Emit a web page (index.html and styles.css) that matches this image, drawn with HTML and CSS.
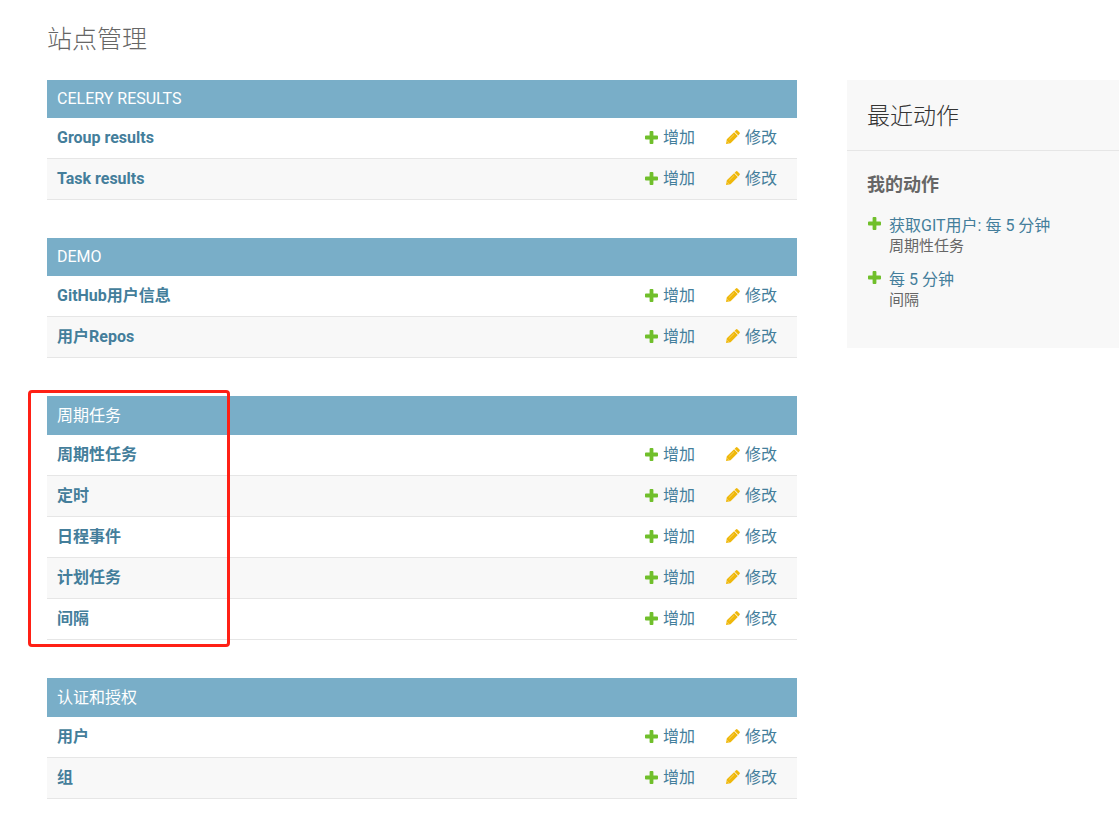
FILE: index.html
```
<!DOCTYPE html>
<html lang="zh-CN">
<head>
<meta charset="utf-8">
<title>站点管理</title>
<link rel="stylesheet" href="styles.css">
</head>
<body>
<svg class="sprite" aria-hidden="true">
  <symbol id="plus" viewBox="0 0 13 13"><path fill="#70bf2b" d="M5.500 0h2q.9 0 .9.9v3.700h3.700q.9 0 .9.9v2q0 .9-.9.9H8.400v3.700q0 .9-.9.9h-2q-.9 0-.9-.9V8.400H.9Q0 8.400 0 7.500v-2q0-.9.9-.9h3.700V.9q0-.9.9-.9z"/></symbol>
  <symbol id="pencil" viewBox="0 0 14 14"><path fill="#efb80b" d="M0 14l.8-4.700 7.300-7 3.700 3.700-7.200 7.200zM8.600 1.800L9.900.5q.8-.8 1.600 0l2 2q.8.800 0 1.600L12.300 5.400z"/><path fill="none" stroke="#fff" stroke-opacity=".6" stroke-width=".6" d="M3.200 9.400l4.800-4.800M1.200 11.300l1.500 1.500"/></symbol>
</svg>
<div class="page">
  <h1 class="title">站点管理</h1>
  <div class="columns">
    <main class="modules">
      <table class="module">
        <caption><a href="#">CELERY RESULTS</a></caption>
        <tbody>
        <tr><th scope="row"><a href="#">Group results</a></th><td><a class="action" href="#"><svg class="icon"><use href="#plus"/></svg>增加</a></td><td><a class="action" href="#"><svg class="icon pencil"><use href="#pencil"/></svg>修改</a></td></tr>
        <tr><th scope="row"><a href="#">Task results</a></th><td><a class="action" href="#"><svg class="icon"><use href="#plus"/></svg>增加</a></td><td><a class="action" href="#"><svg class="icon pencil"><use href="#pencil"/></svg>修改</a></td></tr>
        </tbody>
      </table>
      <table class="module">
        <caption><a href="#">DEMO</a></caption>
        <tbody>
        <tr><th scope="row"><a href="#">GitHub用户信息</a></th><td><a class="action" href="#"><svg class="icon"><use href="#plus"/></svg>增加</a></td><td><a class="action" href="#"><svg class="icon pencil"><use href="#pencil"/></svg>修改</a></td></tr>
        <tr><th scope="row"><a href="#">用户Repos</a></th><td><a class="action" href="#"><svg class="icon"><use href="#plus"/></svg>增加</a></td><td><a class="action" href="#"><svg class="icon pencil"><use href="#pencil"/></svg>修改</a></td></tr>
        </tbody>
      </table>
      <div class="marked">
        <table class="module tall">
          <caption><a href="#">周期任务</a></caption>
          <tbody>
          <tr><th scope="row"><a href="#">周期性任务</a></th><td><a class="action" href="#"><svg class="icon"><use href="#plus"/></svg>增加</a></td><td><a class="action" href="#"><svg class="icon pencil"><use href="#pencil"/></svg>修改</a></td></tr>
          <tr><th scope="row"><a href="#">定时</a></th><td><a class="action" href="#"><svg class="icon"><use href="#plus"/></svg>增加</a></td><td><a class="action" href="#"><svg class="icon pencil"><use href="#pencil"/></svg>修改</a></td></tr>
          <tr><th scope="row"><a href="#">日程事件</a></th><td><a class="action" href="#"><svg class="icon"><use href="#plus"/></svg>增加</a></td><td><a class="action" href="#"><svg class="icon pencil"><use href="#pencil"/></svg>修改</a></td></tr>
          <tr><th scope="row"><a href="#">计划任务</a></th><td><a class="action" href="#"><svg class="icon"><use href="#plus"/></svg>增加</a></td><td><a class="action" href="#"><svg class="icon pencil"><use href="#pencil"/></svg>修改</a></td></tr>
          <tr><th scope="row"><a href="#">间隔</a></th><td><a class="action" href="#"><svg class="icon"><use href="#plus"/></svg>增加</a></td><td><a class="action" href="#"><svg class="icon pencil"><use href="#pencil"/></svg>修改</a></td></tr>
          </tbody>
        </table>
        <div class="marker"></div>
      </div>
      <table class="module tall">
        <caption><a href="#">认证和授权</a></caption>
        <tbody>
        <tr><th scope="row"><a href="#">用户</a></th><td><a class="action" href="#"><svg class="icon"><use href="#plus"/></svg>增加</a></td><td><a class="action" href="#"><svg class="icon pencil"><use href="#pencil"/></svg>修改</a></td></tr>
        <tr><th scope="row"><a href="#">组</a></th><td><a class="action" href="#"><svg class="icon"><use href="#plus"/></svg>增加</a></td><td><a class="action" href="#"><svg class="icon pencil"><use href="#pencil"/></svg>修改</a></td></tr>
        </tbody>
      </table>
    </main>
    <aside class="recent">
      <h2>最近动作</h2>
      <h3>我的动作</h3>
      <ul class="actions">
        <li><svg class="icon"><use href="#plus"/></svg><div><a href="#">获取GIT用户: 每 5 分钟</a><span class="kind">周期性任务</span></div></li>
        <li><svg class="icon"><use href="#plus"/></svg><div><a href="#">每 5 分钟</a><span class="kind">间隔</span></div></li>
      </ul>
    </aside>
  </div>
</div>
</body>
</html>
```
FILE: styles.css
```
* { box-sizing: border-box; }
body {
  margin: 0;
  background: #fff;
  color: #666;
  font-family: Roboto, "Noto Sans CJK SC", sans-serif;
  font-size: 16px;
  line-height: 20px;
}
a { color: #447e9b; text-decoration: none; }
.sprite { display: none; }
.page { padding: 24px 0 38px 47px; }
.title {
  margin: 0 0 24px;
  font-size: 25px;
  font-weight: 300;
  line-height: 32px;
}
.columns {
  display: grid;
  grid-template-columns: minmax(0, 1fr) 272px;
  align-items: start;
  gap: 50px;
}
.modules { display: flex; flex-direction: column; gap: 38px; }
.module { width: 100%; border-collapse: separate; border-spacing: 0; }
.module caption {
  padding: 9px 10px;
  background: #79aec8;
  text-align: left;
}
.module.tall caption { padding-top: 10px; }
.module caption a { color: #fff; }
.module th, .module td {
  height: 41px;
  padding: 0 20px 0 10px;
  border-bottom: 1px solid #e6e6e6;
  text-align: left;
  white-space: nowrap;
}
.module th { width: 100%; font-weight: 700; }
.module td + td { padding-left: 11px; }
.module tr:nth-child(even) { background: #f8f8f8; }
.action { display: flex; align-items: center; gap: 5px; }
.action .icon { margin-bottom: 2px; }
.icon { flex: none; width: 13px; height: 13px; }
.icon.pencil { width: 14px; height: 14px; }
.marked { position: relative; }
.marker {
  position: absolute;
  top: -6px;
  bottom: -7px;
  left: -19px;
  width: 202px;
  border: 3px solid #ff2015;
  border-radius: 4px;
  pointer-events: none;
}
.recent { padding-bottom: 38px; background: #f8f8f8; }
.recent h2 {
  margin: 0;
  padding: 22px 20px 18px;
  border-bottom: 1px solid #e6e6e6;
  color: #333;
  font-size: 23px;
  font-weight: 300;
  line-height: 30px;
}
.recent h3 {
  margin: 0;
  padding: 21px 20px 16px;
  font-size: 18px;
  font-weight: 700;
  line-height: 26px;
}
.actions {
  display: flex;
  flex-direction: column;
  gap: 14px;
  margin: 0;
  padding: 2px 20px 0 21px;
  list-style: none;
}
.actions li { display: flex; gap: 8px; }
.actions .icon { margin-top: 1px; }
.actions a, .kind { display: block; }
.kind { font-size: 15px; }
```
